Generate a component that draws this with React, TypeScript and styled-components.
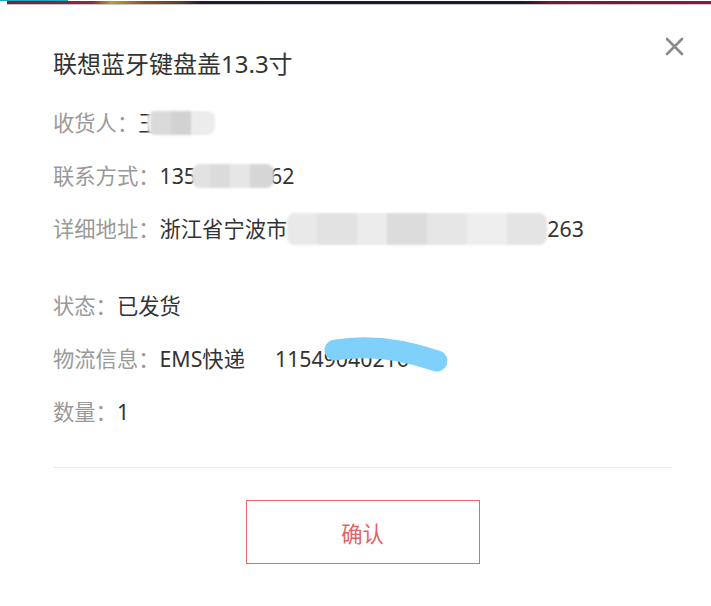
import React from "react";
import styled, { createGlobalStyle } from "styled-components";

const Global = createGlobalStyle`
  html, body { margin: 0; padding: 0; background: #fff; }
  body { font-family: "Noto Sans", "Noto Sans CJK SC", sans-serif; }
  * { box-sizing: border-box; }
`;

const Page = styled.div`
  width: 711px;
  height: 606px;
  background: #fff;
  display: flex;
  flex-direction: column;
  overflow: hidden;
`;

const TopStrip = styled.div`
  height: 5px;
  flex: none;
  background:
    linear-gradient(#1fa8b8, #1fa8b8) 0 0 / 68px 1px no-repeat,
    linear-gradient(
        90deg,
        #7e1d3e 0,
        #8b2b3c 85px,
        #b7a12c 105px,
        #8a5a22 135px,
        #5e3b24 175px,
        #201838 195px,
        #1e1736 515px,
        #7e1434 545px,
        #8e1837 100%
      )
      7px 1px / calc(100% - 7px) 3px no-repeat,
    linear-gradient(#c9c4cf, #c9c4cf) 7px 4px / 100% 1px no-repeat;
`;

const Modal = styled.div`
  position: relative;
  flex: 1;
  padding: 43px 39px 0 53px;
  display: flex;
  flex-direction: column;
`;

const CloseButton = styled.button`
  position: absolute;
  top: 31px;
  right: 27px;
  width: 20px;
  height: 20px;
  padding: 0;
  border: 0;
  background: none;
  cursor: pointer;
  display: flex;
  align-items: center;
  justify-content: center;
`;

const Title = styled.h2`
  margin: 0;
  font-size: 24px;
  line-height: 32px;
  font-weight: 400;
  color: #333;
`;

const Group = styled.div<{ $top: number }>`
  margin-top: ${(p) => p.$top}px;
  display: flex;
  flex-direction: column;
  gap: 21px;
`;

const Row = styled.div`
  display: flex;
  align-items: center;
  height: 32px;
  font-size: 21.3px;
  line-height: 32px;
  white-space: nowrap;
`;

const Label = styled.span`
  color: #999;
`;

const Value = styled.span`
  color: #333;
  display: inline-flex;
  align-items: center;
`;

const Mosaic = styled.span<{ $w: number; $h: number; $bg: string; $ml?: number }>`
  display: inline-block;
  width: ${(p) => p.$w}px;
  height: ${(p) => p.$h}px;
  margin-left: ${(p) => p.$ml ?? 0}px;
  background: ${(p) => p.$bg};
  border-radius: 8px;
  filter: blur(1.2px);
`;

const Tail = styled.span<{ $ml: number }>`
  margin-left: ${(p) => p.$ml}px;
`;

const Tracking = styled.span`
  position: relative;
  margin-left: 30px;
  display: inline-block;
`;

const Scribble = styled.svg`
  position: absolute;
  left: 48px;
  top: -5px;
  overflow: visible;
`;

const Divider = styled.hr`
  margin: 39px 0 0;
  border: 0;
  height: 1px;
  background: #ebebeb;
`;

const Footer = styled.div`
  display: flex;
  justify-content: center;
  margin-top: 32px;
`;

const ConfirmButton = styled.button`
  width: 234px;
  height: 64px;
  border: 1.5px solid #e46a6a;
  background: #fff;
  color: #e46262;
  font-family: "Noto Sans CJK SC", sans-serif;
  font-size: 21.3px;
  cursor: pointer;
`;

export default function App() {
  return (
    <Page>
      <Global />
      <TopStrip />
      <Modal>
        <CloseButton aria-label="关闭">
          <svg width="19" height="19" viewBox="0 0 19 19">
            <path d="M2 2 L17 17 M17 2 L2 17" stroke="#8a8a8a" strokeWidth="2.6" strokeLinecap="round" />
          </svg>
        </CloseButton>
        <Title>联想蓝牙键盘盖13.3寸</Title>
        <Group $top={27}>
          <Row>
            <Label>收货人：</Label>
            <Value>
              王
              <Mosaic
                $w={68}
                $h={24}
                $ml={-13}
                $bg="linear-gradient(90deg, #f0f0f0 0 4px, #dadada 4px 24px, #d2d2d2 24px 44px, #ececec 44px 100%)"
              />
            </Value>
          </Row>
          <Row>
            <Label>联系方式：</Label>
            <Value>
              135
              <Mosaic
                $w={82}
                $h={24}
                $ml={-4}
                $bg="linear-gradient(90deg, #e2e2e2 0 18px, #dbdbdb 18px 38px, #e6e6e6 38px 58px, #d6d6d6 58px 100%)"
              />
              <Tail $ml={-4}>62</Tail>
            </Value>
          </Row>
          <Row>
            <Label>详细地址：</Label>
            <Value>
              浙江省宁波市
              <Mosaic
                $w={260}
                $h={32}
                $bg="linear-gradient(90deg, #e9e9e9 0 30px, #e2e2e2 30px 70px, #ececec 70px 100px, #dcdcdc 100px 140px, #e6e6e6 140px 180px, #eeeeee 180px 220px, #e4e4e4 220px 100%)"
              />
              <Tail $ml={0}>263</Tail>
            </Value>
          </Row>
        </Group>
        <Group $top={45}>
          <Row>
            <Label>状态：</Label>
            <Value>已发货</Value>
          </Row>
          <Row>
            <Label>物流信息：</Label>
            <Value>
              EMS快递
              <Tracking>
                11549040216
                <Scribble width="130" height="40" viewBox="0 0 130 40">
                  <path
                    d="M12 12 Q 60 4 114 23"
                    stroke="#7fd0fa"
                    strokeWidth="21"
                    strokeLinecap="round"
                    fill="none"
                  />
                </Scribble>
              </Tracking>
            </Value>
          </Row>
          <Row>
            <Label>数量：</Label>
            <Value>1</Value>
          </Row>
        </Group>
        <Divider />
        <Footer>
          <ConfirmButton>确认</ConfirmButton>
        </Footer>
      </Modal>
    </Page>
  );
}
